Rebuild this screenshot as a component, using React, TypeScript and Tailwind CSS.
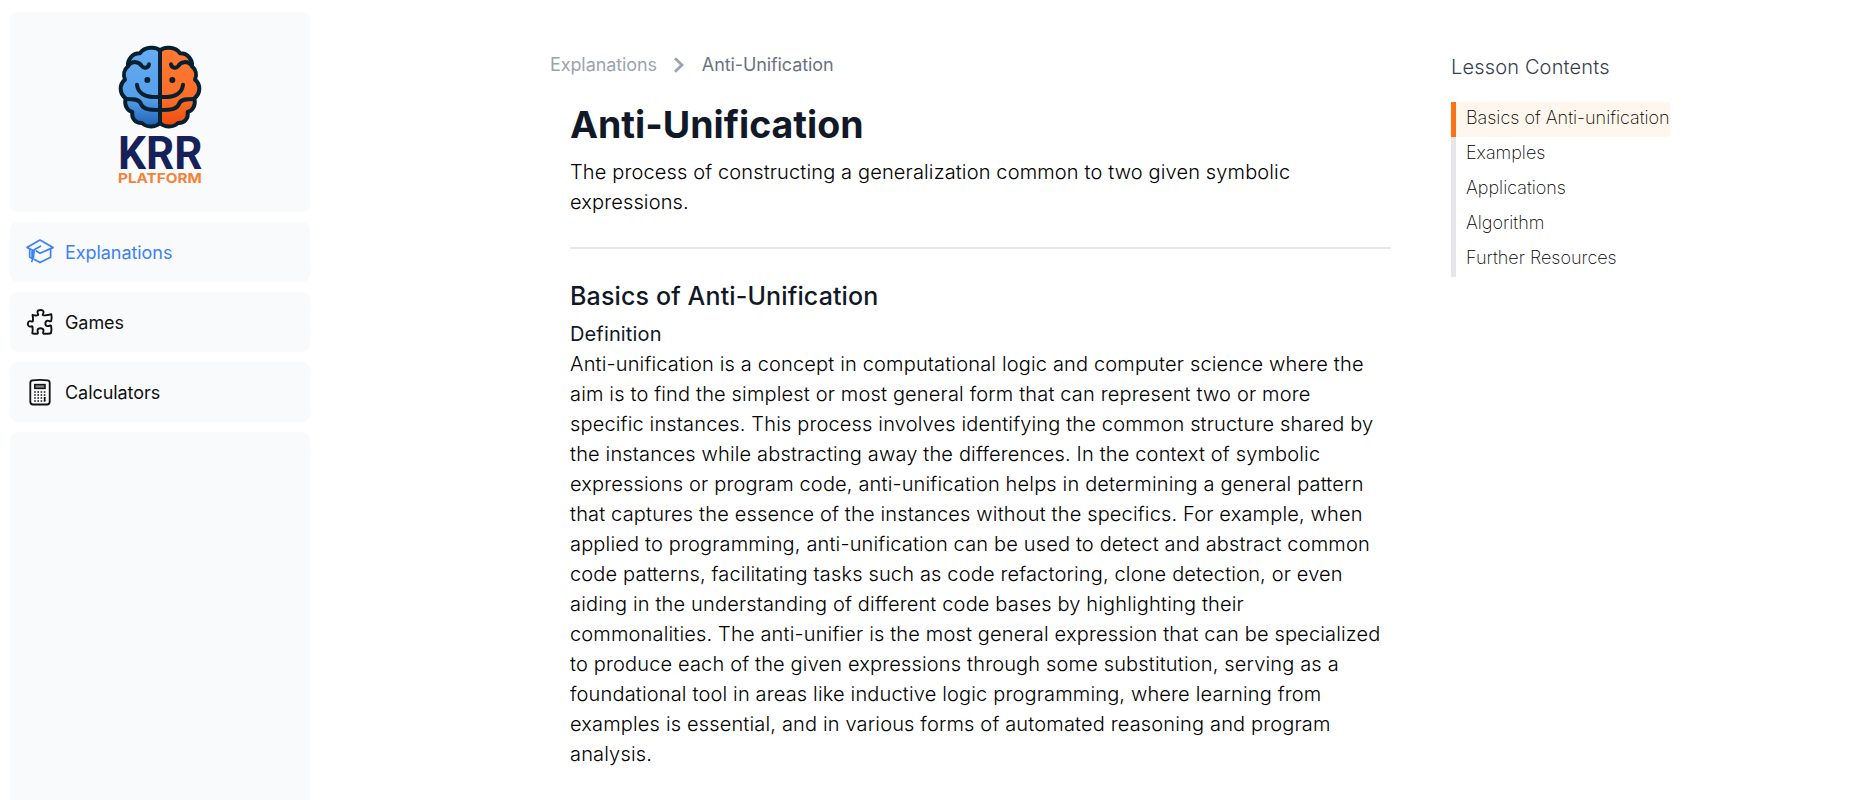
import React from "react";

const nav = [
  { label: "Explanations", icon: <CapIcon />, color: "text-[#3b82f6]" },
  { label: "Games", icon: <PuzzleIcon />, color: "text-[#111]" },
  { label: "Calculators", icon: <CalculatorIcon />, color: "text-[#111]" },
];

const lessons = ["Basics of Anti-unification", "Examples", "Applications", "Algorithm", "Further Resources"];

function CapIcon() {
  return (
    <svg width="28" height="28" viewBox="0 0 28 28" fill="none" stroke="currentColor" strokeWidth="1.7" strokeLinejoin="round" strokeLinecap="round">
      <path d="M1 9.600 14 2l13 7.600L14 15.300l-3.800-2.300M1 9.600l6.800 3.200" />
      <path d="M14.500 8.200 8.200 11.800 7.500 19l-1.700 4.400M24.600 11.500v7.700L14 24.600l-5.500-3.200M3.700 11.400v7.600l2.500 1.400" />
      <path d="M6.300 13.500v6" strokeWidth="2.200" />
    </svg>
  );
}

function PuzzleIcon() {
  return (
    <svg width="28" height="28" viewBox="0 0 28 28" fill="none" stroke="currentColor" strokeWidth="1.9" strokeLinejoin="round">
      <path d="M6.500 6.800Q9.500 7.800 11.900 7.200C13.100 6.600 11 5.400 11.500 3.600C12.100 1.500 16.900 1.500 17.500 3.600C18 5.400 15.900 6.600 17.100 7.200Q20.500 7.800 25.300 6.200Q26.100 10 25.100 13C24.400 14.200 23.200 12.400 21.400 12.700C18.700 13.200 18.700 17.600 21.400 18.100C23.200 18.400 24.400 16.700 25.100 18Q25.900 21.500 24.900 25.200Q21 26 17.500 25.700C16.100 25 17.800 23.800 17.500 22C17 19.600 12 19.600 11.500 22C11.200 23.800 12.900 25 11.500 25.700Q9 26 6.300 25.300Q7 21.800 6.500 18.600C5.900 17.300 5 19 3.600 18.600C1.200 18 1.200 13.800 3.600 13.200C5 12.800 6.300 14.500 6.900 13.200Q7.300 10 6.500 6.800Z" />
    </svg>
  );
}

function CalculatorIcon() {
  return (
    <svg width="28" height="28" viewBox="0 0 28 28" fill="none" stroke="currentColor">
      <path d="M4.300 4.800Q4.300 2.700 6.500 2.400Q14 1.400 21.500 2.400Q23.700 2.700 23.700 4.800V23.800Q23.700 26.500 21 26.500H7Q4.300 26.500 4.300 23.800Z" strokeWidth="1.800" />
      <rect x="8.800" y="6.600" width="10.200" height="3.800" fill="#888" strokeWidth="1.500" />
      <path d="M8.200 14h11.400M8.200 17h11.400M8.200 20h11.400M8.200 23h11.400" strokeWidth="1.500" strokeDasharray="1.600 1.600" />
      <path d="M18.700 19v4" strokeWidth="1.600" />
    </svg>
  );
}

function Logo() {
  return (
    <svg width="120" height="165" viewBox="0 0 360 495">
      <defs>
        <linearGradient id="blue" x1="0" y1="0" x2="0" y2="1">
          <stop offset="0" stopColor="#65adf5" />
          <stop offset="0.65" stopColor="#559fe9" />
          <stop offset="1" stopColor="#1c62b5" />
        </linearGradient>
        <linearGradient id="orange" x1="0" y1="0" x2="0" y2="1">
          <stop offset="0" stopColor="#ff7a34" />
          <stop offset="0.65" stopColor="#fb6d26" />
          <stop offset="1" stopColor="#ee4a0c" />
        </linearGradient>
      </defs>
      <g stroke="#07202f" strokeWidth="12" strokeLinecap="round" strokeLinejoin="round">
        <path fill="url(#blue)" d="M180 62C168 48 132 50 120 70C98 69 82 88 84 109C72 119 69 135 75 149C58 163 57 190 77 205C72 225 81 241 97 246C94 265 106 280 126 279C140 294 170 292 180 278Z" />
        <path fill="url(#orange)" d="M180 62C192 48 228 50 240 70C262 69 278 88 276 109C288 119 291 135 285 149C302 163 303 190 283 205C288 225 279 241 263 246C266 265 254 280 234 279C220 294 190 292 180 278Z" />
        <g fill="none">
          <path d="M180 62V278" />
          <path d="M84 107C98 90 119 96 124 107C133 119 146 112 147 103M276 107C262 90 241 96 236 107C227 119 214 112 213 103" />
          <path d="M111 164C113 188 135 202 160 201H200C225 202 247 188 249 164" />
          <path d="M78 207C99 207 117 207 122 220C128 238 145 240 180 240C215 240 232 238 238 220C243 207 261 207 282 207" />
        </g>
      </g>
      <circle cx="142" cy="150" r="9" fill="#07202f" />
      <circle cx="217" cy="150" r="9" fill="#07202f" />
      <text x="54" y="418" textLength="253" lengthAdjust="spacingAndGlyphs" fontFamily="Roboto, sans-serif" fontSize="141" fontWeight="700" fill="#16215a">KRR</text>
      <text x="54" y="459" textLength="251" lengthAdjust="spacingAndGlyphs" fontFamily="Inter, sans-serif" fontSize="40" fontWeight="700" fill="#f58235">PLATFORM</text>
    </svg>
  );
}

export default function App() {
  return (
    <div className="flex h-[800px] overflow-hidden bg-white font-['Inter',sans-serif] text-[#111]">
      <aside className="ml-2.5 flex w-[300px] shrink-0 flex-col gap-2.5 pt-3">
        <div className="flex h-[200px] shrink-0 justify-center rounded-lg bg-[#f9fafc] pt-[18px]">
          <Logo />
        </div>
        {nav.map((item) => (
          <a key={item.label} className={`flex h-[60px] shrink-0 items-center gap-[11px] rounded-lg bg-[#f9fafc] pl-4 text-lg tracking-[-0.06px] ${item.color}`}>
            {item.icon}
            <span className="pt-0.5">{item.label}</span>
          </a>
        ))}
        <div className="flex-1 rounded-t-lg bg-[#f9fafc]" />
      </aside>

      <main className="ml-[240px] w-[861px] shrink-0 pt-[50px]">
        <nav className="flex h-[30px] items-center text-lg tracking-[-0.1px] text-[#9ca3af]">
          <span>Explanations</span>
          <svg width="10" height="16" viewBox="0 0 10 16" className="mr-[18px] ml-[17px]" fill="none" stroke="currentColor" strokeWidth="2.800">
            <path d="m1 1.200 7 6.800-7 6.800" />
          </svg>
          <span className="text-[#6b7280]">Anti-Unification</span>
        </nav>
        <article className="px-5 text-xl leading-[30px] font-light tracking-[0.14px]">
          <h1 className="mt-5 text-[37.5px] leading-[50px] font-bold tracking-normal text-[#111827]">Anti-Unification</h1>
          <p className="mt-[7px] text-black">The process of constructing a generalization common to two given symbolic expressions.</p>
          <hr className="mt-[30px] border-t-2 border-[#e5e7eb]" />
          <h2 className="mt-8 text-[25px] leading-[30px] font-medium text-[#111827]">Basics of Anti-Unification</h2>
          <h3 className="mt-2 font-normal text-[#111827]">Definition</h3>
          <p className="pr-2 tracking-[0.16px] text-black">
            Anti-unification is a concept in computational logic and computer science where the aim is to find the simplest or most general form that can represent two or more specific instances. This process involves identifying the common structure shared by the instances while abstracting away the differences. In the context of symbolic expressions or program code, anti-unification helps in determining a general pattern that captures the essence of the instances without the specifics. For example, when applied to programming, anti-unification can be used to detect and abstract common code patterns, facilitating tasks such as code refactoring, clone detection, or even aiding in the understanding of different code bases by highlighting their commonalities. The anti-unifier is the most general expression that can be specialized to produce each of the given expressions through some substitution, serving as a foundational tool in areas like inductive logic programming, where learning from examples is essential, and in various forms of automated reasoning and program analysis.
          </p>
        </article>
      </main>

      <aside className="ml-10 pt-[52px]">
        <h4 className="text-xl leading-[30px] font-light tracking-[0.16px] text-[#374151]">Lesson Contents</h4>
        <ul className="mt-5 w-[219px] text-lg font-extralight text-black">
          {lessons.map((lesson, i) => (
            <li
              key={lesson}
              className={`flex h-[35px] items-center border-l-[5px] pb-[3px] pl-2.5 whitespace-nowrap ${i === 0 ? "border-[#f97316] bg-[#fff7ed]" : "border-[#e5e7eb]"}`}
            >
              {lesson}
            </li>
          ))}
        </ul>
      </aside>
    </div>
  );
}
